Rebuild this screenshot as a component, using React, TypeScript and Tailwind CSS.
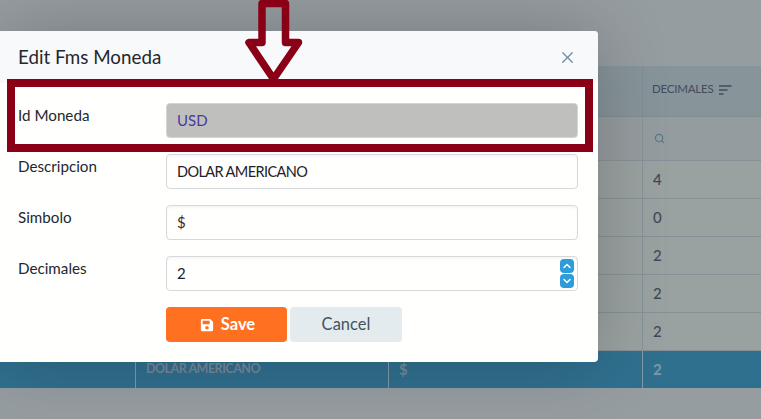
import React from 'react';
import { X, Search, ChevronUp, ChevronDown } from 'lucide-react';
import { FaSave } from 'react-icons/fa';

const rows = ['4', '0', '2', '2', '2'];

const cols = 'grid grid-cols-[135px_253px_254px_119px]';

const BackgroundTable = () => (
  <div className="pt-[66px] text-[15px] text-[#3e4a56]">
    <div className={`${cols} h-[51px] bg-[#87949a] border-b border-[#7f8c92]`}>
      <div />
      <div className="border-l border-[#7f8c92]" />
      <div className="border-l border-[#7f8c92]" />
      <div className="border-l border-[#7f8c92] pl-[9px] pb-[4px] flex items-center gap-[5px] text-[11.5px] tracking-[-0.2px] text-[#414d5a]">
        DECIMALES
        <svg width="13" height="10" viewBox="0 0 13 10" className="mt-[1px]" stroke="#414d5a" strokeWidth="1.4">
          <path d="M0 1h12.5M0 5h8.5M0 9h4.5" />
        </svg>
      </div>
    </div>
    <div className={`${cols} h-[44px] bg-[#959c9f] border-b border-[#869297]`}>
      <div />
      <div />
      <div />
      <div className="border-l border-[#869297] pl-[11px] flex items-center">
        <Search size={11} strokeWidth={2.4} className="text-[#567685]" />
      </div>
    </div>
    {rows.map((value, i) => (
      <div key={i} className={`${cols} h-[38px] bg-[#9aa1a1] border-b border-[#869297]`}>
        <div />
        <div />
        <div />
        <div className="border-l border-[#869297] pl-[10px] flex items-center font-medium">{value}</div>
      </div>
    ))}
    <div className={`${cols} h-[37px] bg-[#30708f] text-[#7f97a5] font-bold`}>
      <div />
      <div className="border-l border-[#7f9aa8] pl-[10px] flex items-center text-[12.5px] tracking-[-0.5px] text-[#75889a]">DOLAR AMERICANO</div>
      <div className="border-l border-[#7f9aa8] pl-[10px] flex items-center text-[#75889a]">$</div>
      <div className="border-l border-[#7f9aa8] pl-[10px] flex items-center">2</div>
    </div>
  </div>
);

type FieldProps = {
  label: string;
  value: string;
  disabled?: boolean;
  spinner?: boolean;
  valueClass?: string;
};

const Field = ({ label, value, disabled, spinner, valueClass }: FieldProps) => (
  <div className="flex h-[35px] mb-4">
    <label className="w-[148px] pt-[2px] text-[15.2px] leading-[20px] text-[#23272f]">{label}</label>
    <div
      className={`relative flex-1 flex items-center px-[10px] rounded border text-[15px] ${
        disabled ? 'bg-[#bfbfbd] border-[#d4d4d2]' : 'bg-[#fffffd] border-[#d5d9db] shadow-[inset_0_2px_3px_rgba(0,0,0,0.04)]'
      } ${valueClass ?? 'text-[#1d2129]'}`}
    >
      <span className={value.length > 10 ? 'text-[14.5px] tracking-[-0.6px]' : ''}>{value}</span>
      {spinner && (
        <div className="absolute right-[3px] top-[2px] flex flex-col gap-px">
          <span className="w-[14px] h-[14px] rounded-sm bg-[#2d9cdb] flex items-center justify-center text-white">
            <ChevronUp size={12} strokeWidth={3} />
          </span>
          <span className="w-[14px] h-[14px] rounded-sm bg-[#2d9cdb] flex items-center justify-center text-white">
            <ChevronDown size={12} strokeWidth={3} />
          </span>
        </div>
      )}
    </div>
  </div>
);

const Modal = () => (
  <div className="absolute left-0 top-[31px] w-[598px] rounded-r bg-[#fffffd] shadow-[0_0_70px_rgba(0,0,0,0.22)]">
    <div className="h-[52px] bg-[#f8f9fa] flex items-center justify-between pl-[18px] pr-[21px] rounded-tr">
      <h2 className="text-[18.8px] text-[#23272f]">Edit Fms Moneda</h2>
      <X size={19} strokeWidth={1.6} className="text-[#6f8a9a]" />
    </div>
    <div className="pt-5 pb-5 pl-[18px] pr-5">
      <Field label="Id Moneda" value="USD" disabled valueClass="text-[#4a3a9c]" />
      <Field label="Descripcion" value="DOLAR AMERICANO" />
      <Field label="Simbolo" value="$" valueClass="text-[#4a1f24]" />
      <Field label="Decimales" value="2" spinner />
      <div className="flex pl-[148px] gap-[3px]">
        <button className="w-[121px] h-[35px] pl-[2px] rounded bg-[#ff7020] text-white text-[16.5px] font-bold flex items-center justify-center gap-[7px]">
          <FaSave size={14} />
          Save
        </button>
        <button className="w-[112px] h-[35px] rounded bg-[#e4ebef] text-[#45525f] text-[16.5px]">Cancel</button>
      </div>
    </div>
  </div>
);

// annotation drawn over the screenshot: arrow and red frame
const Annotation = () => (
  <>
    <div className="absolute left-[7px] top-[79px] w-[586px] h-[73px] border-8 border-[#8a0016]" />
    <svg className="absolute left-[240px] top-0" width="70" height="84" viewBox="240 0 70 84" fill="none">
      <path
        d="M262 3.5H285.5V42.5H298.5L273.5 79L249 42.5H262Z"
        stroke="#8a0016"
        strokeWidth="7.5"
        strokeLinejoin="round"
      />
    </svg>
  </>
);

export default function App() {
  return (
    <div
      className="relative w-[761px] h-[419px] overflow-hidden bg-[#969da1]"
      style={{ fontFamily: 'Lato, sans-serif' }}
    >
      <BackgroundTable />
      <Modal />
      <Annotation />
    </div>
  );
}
